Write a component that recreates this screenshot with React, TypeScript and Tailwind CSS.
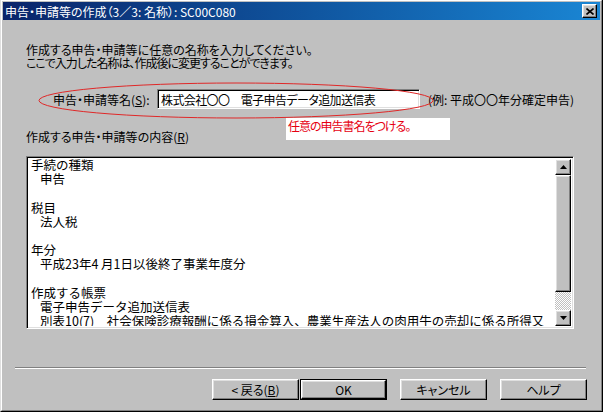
import React from 'react';

const raised =
  'border border-t-white border-l-white border-r-black border-b-black shadow-[inset_-1px_-1px_#808080,inset_1px_1px_#dfdfdf]';
const sunken =
  'border border-t-[#808080] border-l-[#808080] border-r-white border-b-white shadow-[inset_1px_1px_#000,inset_-1px_-1px_#dfdfdf]';

const contentLines: { text: string; indent?: boolean }[] = [
  { text: '手続の種類' },
  { text: '申告', indent: true },
  { text: '' },
  { text: '税目' },
  { text: '法人税', indent: true },
  { text: '' },
  { text: '年分' },
  { text: '平成23年4 月1日以後終了事業年度分', indent: true },
  { text: '' },
  { text: '作成する帳票' },
  { text: '電子申告データ追加送信表', indent: true },
  { text: '別表10(7)　社会保険診療報酬に係る損金算入、農業生産法人の肉用牛の売却に係る所得又', indent: true },
];

const Arrow = ({ down }: { down?: boolean }) => (
  <svg width="7" height="4" viewBox="0 0 7 4">
    <polygon points={down ? '0,0 7,0 3.5,4' : '3.5,0 7,4 0,4'} fill="#000" />
  </svg>
);

const WinButton = ({ children, isDefault }: { children: React.ReactNode; isDefault?: boolean }) =>
  isDefault ? (
    <div className="w-[87px] h-[21px] border border-black">
      <div className={`w-full h-full ${raised} flex items-center justify-center`}>{children}</div>
    </div>
  ) : (
    <div className={`w-[87px] h-[21px] ${raised} flex items-center justify-center`}>{children}</div>
  );

export default function App() {
  return (
    <div className="relative w-[603px] h-[412px] bg-[#c0c0c0] border border-t-0 border-l-[#dfdfdf] border-r-black border-b-black font-['Noto_Sans_CJK_JP',sans-serif] text-[12px] leading-[13px] text-black [font-feature-settings:'palt'] overflow-hidden">
      <div className="h-full border border-t-white border-l-white border-r-[#808080] border-b-[#808080] p-px flex flex-col">
        {/* title bar */}
        <div className="h-[18px] bg-linear-to-r from-[#0a246a] to-[#1a86d4] flex items-center justify-between">
          <span className="pl-[2px] text-white text-[12px]">申告・申請等の作成（3／3: 名称）: SC00C080</span>
          <div className={`w-[15px] h-[14px] mr-[3px] ${raised} bg-[#c0c0c0] flex items-center justify-center`}>
            <svg width="8" height="7" viewBox="0 0 8 7">
              <path d="M0.5 0.5 L7.5 6.5 M7.5 0.5 L0.5 6.5" stroke="#000" strokeWidth="1.6" />
            </svg>
          </div>
        </div>

        {/* body */}
        <div className="flex-1 pl-[23px] pt-[23px] flex flex-col">
          <div>
            <p>作成する申告・申請等に任意の名称を入力してください。</p>
            <p className="tracking-[-1px]">ここで入力した名称は、作成後に変更することができます。</p>
          </div>

          <div className="mt-[20px] ml-[27px] h-[20px] flex items-center">
            <span className="w-[104px]">
              申告・申請等名(<span className="underline">S</span>):
            </span>
            <div className={`w-[263px] h-[20px] bg-white ${sunken} flex items-center pl-[3px] tracking-[-0.6px]`}>
              株式会社〇〇　電子申告データ追加送信表
            </div>
            <span className="ml-[8px]">(例: 平成〇〇年分確定申告)</span>
          </div>

          <p className="mt-[21px]">
            作成する申告・申請等の内容(<span className="underline">R</span>)
          </p>

          <div className={`mt-[13px] w-[548px] h-[173px] bg-white ${sunken} p-[2px] flex`}>
            <div className="flex-1 overflow-hidden text-[12.5px] leading-[14.2px] [font-feature-settings:normal] whitespace-nowrap">
              <div className="-mt-[1px]">
                {contentLines.map((l, i) => (
                  <div key={i} className={`h-[14.2px] ${l.indent ? 'pl-[11px]' : 'pl-[2px]'}`}>
                    {l.text}
                  </div>
                ))}
              </div>
            </div>
            <div className="w-[16px] flex flex-col bg-[#c0c0c0]">
              <div className={`h-[16px] ${raised} flex items-center justify-center`}>
                <Arrow />
              </div>
              <div className={`h-[117px] ${raised}`} />
              <div className="flex-1 bg-[repeating-conic-gradient(#fff_0_25%,#c0c0c0_0_50%)] bg-size-[2px_2px]" />
              <div className={`h-[16px] ${raised} flex items-center justify-center`}>
                <Arrow down />
              </div>
            </div>
          </div>

          <div className="mt-[38px] -ml-[11px] w-[571px] h-[2px] border-t border-t-[#808080] border-b border-b-white" />

          <div className="mt-[10px] ml-[186px] flex">
            <WinButton>
              &lt; 戻る(<span className="underline">B</span>)
            </WinButton>
            <div className="ml-[1px]">
              <WinButton isDefault>OK</WinButton>
            </div>
            <div className="ml-[13px]">
              <WinButton>キャンセル</WinButton>
            </div>
            <div className="ml-[13px]">
              <WinButton>ヘルプ</WinButton>
            </div>
          </div>
        </div>
      </div>

      {/* annotation overlay */}
      <svg className="absolute inset-0 pointer-events-none" width="603" height="412">
        <ellipse cx="235" cy="100.5" rx="197" ry="17.5" fill="none" stroke="#e02828" strokeWidth="1" />
      </svg>
      <div className="absolute left-[285px] top-[118px] w-[164px] h-[22px] bg-white pl-[2px] pt-[1px] text-[#e60012] tracking-[-1px]">
        任意の申告書名をつける。
      </div>
    </div>
  );
}
